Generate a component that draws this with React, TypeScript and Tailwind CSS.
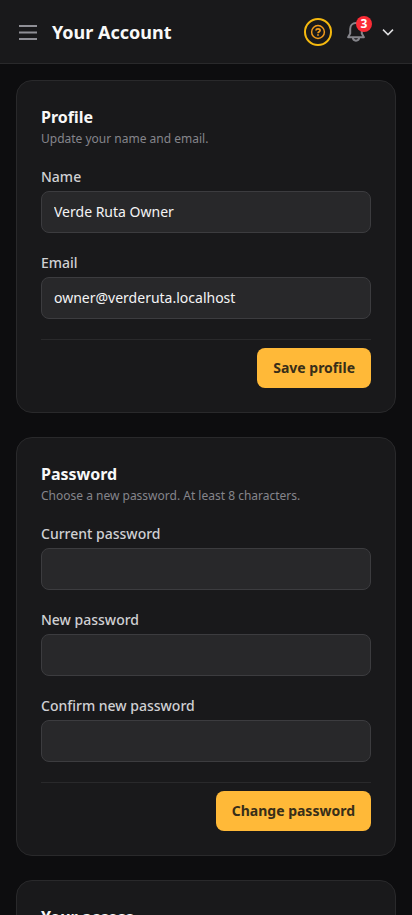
const sections = [
  {
    title: "Profile",
    hint: "Update your name and email.",
    action: "Save profile",
    fields: [
      { label: "Name", type: "text", value: "Verde Ruta Owner" },
      { label: "Email", type: "email", value: "owner@verderuta.localhost" },
    ],
  },
  {
    title: "Password",
    hint: "Choose a new password. At least 8 characters.",
    action: "Change password",
    fields: [
      { label: "Current password", type: "password", value: "" },
      { label: "New password", type: "password", value: "" },
      { label: "Confirm new password", type: "password", value: "" },
    ],
  },
];

const Header = () => (
  <header className="flex h-16 shrink-0 items-center border-b border-[#29292b] bg-[#19191b] px-4">
    <button className="flex size-6 items-center justify-center text-[#8f8f96]" aria-label="Menu">
      <svg viewBox="0 0 24 24" className="size-6" fill="none" stroke="currentColor" strokeWidth="2">
        <path d="M3 6h18M3 12.5h18M3 19h18" />
      </svg>
    </button>
    <h1 className="ml-3 text-lg font-bold text-[#f8f8f8]">Your Account</h1>
    <div className="ml-auto flex items-center">
      <button className="flex size-7 items-center justify-center rounded-full border-2 border-[#f5b90f] text-[#f09a1c]" aria-label="Help">
        <svg viewBox="0 0 16 16" className="size-4 shrink-0" fill="none" stroke="currentColor" strokeWidth="1.5">
          <circle cx="8" cy="8" r="6.4" />
          <path strokeWidth="1.7" d="M5.9 6.5c.1-1.1.9-1.7 2.1-1.7s2.1.7 2.1 1.6c0 1.3-2.1 1.3-2.1 2.9" />
          <path strokeWidth="1.7" d="M8 10.3v1.5" />
        </svg>
      </button>
      <button className="relative ml-3 flex size-6 items-center justify-center text-[#85858b]" aria-label="Notifications">
        <svg viewBox="0 0 24 24" className="size-6" fill="none" stroke="currentColor" strokeWidth="2" strokeLinejoin="round">
          <path d="M12 3c-3.5 0-5.8 2.7-5.8 6v4.6l-2.1 3.6h15.8l-2.1-3.6V9c0-3.3-2.3-6-5.8-6z" />
          <path d="M8.9 17.6c0 1.9 1.3 3.1 3.1 3.1s3.1-1.2 3.1-3.1" />
        </svg>
        <span className="absolute -top-1 -right-1 flex size-4 items-center justify-center rounded-full bg-[#fb2c36] text-xs font-bold text-white">
          3
        </span>
      </button>
      <svg viewBox="0 0 16 16" className="ml-3 size-4" fill="none" stroke="#dedee0" strokeWidth="1.5">
        <path d="M3 5.6l5 5 5-5" />
      </svg>
    </div>
  </header>
);

const App = () => {
  return (
    <div className="flex h-[915px] flex-col overflow-hidden bg-[#0d0d0f] font-['Noto_Sans',sans-serif]">
      <Header />
      <main className="flex flex-col gap-6 p-4">
        {sections.map((section) => (
          <section key={section.title} className="rounded-2xl border border-[#29292b] bg-[#19191b] p-6">
            <h2 className="text-base font-bold text-[#f8f8f8]">{section.title}</h2>
            <p className="mt-0.5 text-xs text-[#85858b]">{section.hint}</p>
            <form className="mt-5 flex flex-col gap-5">
              {section.fields.map((field) => (
                <label key={field.label} className="block text-sm font-medium text-[#d0d0d3]">
                  {field.label}
                  <input
                    type={field.type}
                    defaultValue={field.value}
                    className="mt-1 block h-[42px] w-full rounded-lg border border-[#3c3c3f] bg-[#28282a] px-3 pb-0.5 font-normal text-[#f4f4f5]"
                  />
                </label>
              ))}
              <div className="flex justify-end border-t border-[#29292b] pt-2">
                <button type="button" className="h-10 rounded-lg bg-[#ffb938] px-4 text-sm font-bold text-[#382e18]">
                  {section.action}
                </button>
              </div>
            </form>
          </section>
        ))}
        <section className="rounded-2xl border border-[#29292b] bg-[#19191b] p-6">
          <h2 className="text-base font-bold text-[#f8f8f8]">Your access</h2>
        </section>
      </main>
    </div>
  );
};

export default App;
